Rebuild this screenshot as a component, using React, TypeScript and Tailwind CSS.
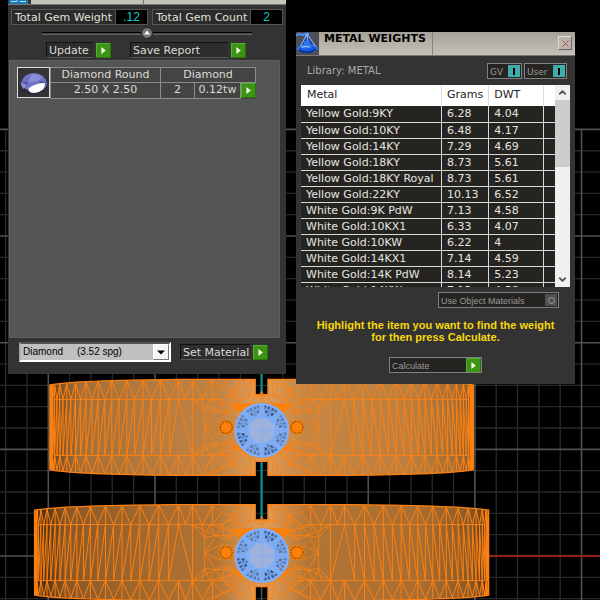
import React from 'react';
import { ChevronDown, ChevronUp, X } from 'lucide-react';

interface MetalRow {
  metal: string;
  grams: string;
  dwt: string;
}

const METALS: MetalRow[] = [
  { metal: 'Yellow Gold:9KY', grams: '6.28', dwt: '4.04' },
  { metal: 'Yellow Gold:10KY', grams: '6.48', dwt: '4.17' },
  { metal: 'Yellow Gold:14KY', grams: '7.29', dwt: '4.69' },
  { metal: 'Yellow Gold:18KY', grams: '8.73', dwt: '5.61' },
  { metal: 'Yellow Gold:18KY Royal', grams: '8.73', dwt: '5.61' },
  { metal: 'Yellow Gold:22KY', grams: '10.13', dwt: '6.52' },
  { metal: 'White Gold:9K PdW', grams: '7.13', dwt: '4.58' },
  { metal: 'White Gold:10KX1', grams: '6.33', dwt: '4.07' },
  { metal: 'White Gold:10KW', grams: '6.22', dwt: '4' },
  { metal: 'White Gold:14KX1', grams: '7.14', dwt: '4.59' },
  { metal: 'White Gold:14K PdW', grams: '8.14', dwt: '5.23' },
  { metal: 'White Gold:14KW', grams: '7.13', dwt: '4.58' },
];

/* ---------- Viewport drawing ---------- */

const CX = 261.6;

const polar = (r: number, deg: number): [number, number] => [
  r * Math.cos((deg * Math.PI) / 180),
  r * Math.sin((deg * Math.PI) / 180),
];

const poly = (points: [number, number][]) => points.map((p) => p.map((n) => n.toFixed(1)).join(',')).join(' ');

const Grid: React.FC = () => {
  const minor: string[] = [];
  const major: string[] = [];
  for (let i = -2; i < 26; i++) {
    (i % 5 === 0 ? major : minor).push(`M${48.3 + i * 21.33} 129V600`);
  }
  for (let j = 0; j < 23; j++) {
    (j % 5 === 0 ? major : minor).push(`M0 ${129.4 + j * 21.33}H600`);
  }
  return (
    <g fill="none">
      <path d={minor.join('')} stroke="#292929" strokeWidth="1.3" />
      <path d={major.join('')} stroke="#505050" strokeWidth="1.6" />
    </g>
  );
};

// Half of the band, u runs outward from the centre and v down from the middle
const halfMesh = (R: number) => {
  const edge = (u: number) => 47.5 - 5.5 * Math.pow(u / R, 5);
  const cols: number[] = [];
  const start = (Math.asin(83 / R) * 180) / Math.PI;
  for (let a = start; a < 90; a += 2.75) {
    cols.push(R * Math.sin((a * Math.PI) / 180));
  }
  let d = `M40 -28H${R - 4}M30 28H${R - 4}`;
  cols.forEach((u, i) => {
    if (i > 0) {
      d += `M${u.toFixed(1)} -28V28`;
    }
    if (i + 1 < cols.length) {
      d += `M${u.toFixed(1)} -28L${cols[i + 1].toFixed(1)} 28`;
    }
  });
  d += 'M83 -28L69 28V-28';
  const outer = [49, 59, 69, 76, ...cols];
  outer.forEach((u, i) => {
    const e = edge(u);
    const n = outer[i + 1];
    if (i % 2 === 0) {
      d += `M${u} -28V${-e}M${u} 28V${e}`;
      if (n) {
        d += `M${u} ${-e}L${n} -28M${u} 28L${n} ${edge(n)}`;
      }
    } else if (n) {
      d += `M${u} -28L${n} ${-edge(n)}M${u} ${e}L${n} 28`;
    }
  });
  return d;
};

const CROWN =
  'M69 -28L57 -15V16L69 28M69 -28L46 -17L57 0L46 17L69 28M57 -15L46 -17L40 -27L28 -37L22 -47' +
  'M57 16L46 17L40 27L28 37L22 47M57 -15L60 -28M57 16L60 28M40 -27L36 -13L46 -17M40 27L36 13L46 17' +
  'M57 0L40 -8M57 0L40 8M57 -15L52 -28L46 -17M57 16L52 28L46 17M6 -33L20 -28L28 -37L6 -47' +
  'M6 33L20 28L28 37L6 47M10 -47L12 -31M18 -47L12 -31L28 -37L20 -47M10 47L12 31M18 47L12 31' +
  'M20 -28L34 -33L28 -37L40 -40L49 -28M20 28L34 33L28 37L40 40L49 28M40 -40L34 -47M40 -40L49 -47' +
  'M34 -33L40 -27M34 33L40 27M34 -33L24 -20L40 -27M34 33L24 20L40 27M20 -28L24 -20L36 -13' +
  'M20 28L24 20L36 13M28 -37L24 -20L30 -40M28 37L24 20M26 -17L46 -17M26 17L46 17' +
  'M24 -20L52 -28M24 20L52 28M28 -24L32 -12M28 24L32 12M33 -22L34 -12M33 22L34 12M28 37L56 47M24 33L49 47' +
  'M0 -36L6 -28M0 -36V-27M3 -33L1 -27M3 -33H6M6 -33L10 -25M6 33L10 26';

const Gem: React.FC<{ y: number }> = ({ y }) => {
  const star = Array.from({ length: 8 }, (_, i) => i * 45 + 22.5);
  return (
    <g transform={`translate(${CX + 0.2} ${y})`}>
      <circle r="27.2" fill="#7eabf2" />
      {star.map((a, i) => {
        const shade = i === 1 || i === 3 || i === 6 ? '#3a5580' : '#587399';
        return (
          <g key={a} fill={shade}>
            {[-14, -5, 5, 14].map((o) => (
              <polygon key={o} points={poly([polar(25, a + o - 3.4), polar(25, a + o + 3), polar(22, a + o + 3), polar(21.6, a + o - 2.6)])} opacity="0.85" />
            ))}
            {[-9, 0.5, 10].map((o) => (
              <polygon key={o} points={poly([polar(21, a + o - 4), polar(21, a + o + 3.6), polar(17.4, a + o + 4), polar(17.6, a + o - 3)])} />
            ))}
            <polygon points={poly([polar(17, a - 6), polar(17, a + 6), polar(14.8, a)])} opacity="0.7" />
          </g>
        );
      })}
      <g fill="none" stroke="#7eb0ff">
        {star.map((a) => (
          <path
            key={a}
            d={`M${polar(13.5, a - 22.5).join(' ')}L${polar(19, a).join(' ')}L${polar(26, a - 22.5).join(' ')}M${polar(19, a).join(' ')}L${polar(26, a + 22.5).join(' ')}M${polar(19, a).join(' ')}L${polar(13.5, a + 22.5).join(' ')}M${polar(19, a).join(' ')}L${polar(26, a).join(' ')}`}
            strokeWidth="0.8"
          />
        ))}
        <circle r="26.5" strokeWidth="1.8" />
      </g>
      <polygon points={poly(star.map((a) => polar(14, a)))} fill="#9fb2dc" stroke="#80adf5" strokeWidth="1.4" />
      <path d="M-13 0H13M0 -13V13" stroke="#86aeee" strokeWidth="0.9" />
    </g>
  );
};

interface BandProps {
  y: number;
  R: number;
  id: string;
  dark?: boolean;
}

const Band: React.FC<BandProps> = ({ y, R, id, dark = false }) => {
  const outline =
    `M6.4 -48H${R * 0.4}Q${R * 0.88} -47 ${R} -42.5V42.5Q${R * 0.88} 47 ${R * 0.4} 48H6.4V34H-6.4V48` +
    `H${-R * 0.4}Q${-R * 0.88} 47 ${-R} 42.5V-42.5Q${-R * 0.88} -47 ${-R * 0.4} -48H-6.4V-32.5H6.4Z`;
  const mesh = halfMesh(R);
  return (
    <g>
      <defs>
        <linearGradient id={id}>
          <stop offset="0" stopColor={dark ? '#3a220a' : '#6e4519'} />
          <stop offset="0.07" stopColor={dark ? '#8a5826' : '#a46e36'} />
          <stop offset="0.3" stopColor={dark ? '#a96d30' : '#bb7e40'} />
          <stop offset="0.4" stopColor={dark ? '#b17433' : '#c18342'} />
          <stop offset="0.48" stopColor="#db9a58" />
          <stop offset="0.52" stopColor="#db9a58" />
          <stop offset="0.6" stopColor={dark ? '#b37534' : '#c58644'} />
          <stop offset="0.85" stopColor={dark ? '#a96d30' : '#bd7f3e'} />
          <stop offset="0.96" stopColor={dark ? '#8a5826' : '#a46e36'} />
          <stop offset="1" stopColor={dark ? '#5a3612' : '#8a5724'} />
        </linearGradient>
      </defs>
      <g transform={`translate(${CX} ${y})`}>
        <path d={outline} fill={`url(#${id})`} stroke="#fd8010" strokeWidth="1.4" />
        <g fill="none" stroke="#fb8114" strokeWidth="1">
          <path d={mesh} />
          <path d={mesh} transform="scale(-1 1)" />
          <path d={CROWN} strokeWidth="0.8" />
          <path d={CROWN} strokeWidth="0.8" transform="scale(-1 1)" />
        </g>
        <circle cy="3" r="28.2" fill="#fd8108" />
        {[1, -1].map((s) => (
          <g key={s} transform={`scale(${s} 1)`}>
            <path d="M8 -25L31 -23L20 -13ZM22 19L30 18L14 29Z" fill="#fd8108" />
            <path d={`M${R - 2} -42V42M${R - 3} -42L${R - 1} -20V20L${R - 3} 42`} fill="none" stroke="#fd8010" strokeWidth="1.6" />
            <circle cx="35.4" cy="0" r="7.6" fill="#fd8108" />
            <circle cx="35.4" cy="0" r="6" fill="none" stroke="#85501b" strokeWidth="1.4" strokeDasharray="1.5 1" />
          </g>
        ))}
      </g>
      <Gem y={y + 3} />
    </g>
  );
};

const Viewport: React.FC = () => (
  <svg
    viewBox="0 0 600 600"
    preserveAspectRatio="xMinYMin slice"
    className="absolute inset-0 h-full w-full"
    role="img"
    aria-label="Top view of two rings"
  >
    <Grid />
    <line x1={CX} x2={CX} y1="129" y2="556" stroke="#098c8e" strokeWidth="2.2" />
    <line x1="488" x2="600" y1="556.2" y2="556.2" stroke="#b01808" strokeWidth="1.6" />
    <Band y={427.4} R={211.5} id="band-upper" />
    <Band y={552.6} R={227} id="band-lower" dark />
  </svg>
);

/* ---------- Shared controls ---------- */

const PlayIcon: React.FC = () => (
  <svg viewBox="0 0 15 15" className="h-[15px] w-[15px]" aria-hidden="true">
    <rect width="15" height="15" fill="#3c9314" />
    <path d="M0 15V0H15" fill="none" stroke="#5cb83a" strokeWidth="1.6" />
    <path d="M15 0V15H0" fill="none" stroke="#27690c" strokeWidth="1.6" />
    <path d="M5.4 4L9.8 7.5L5.4 11Z" fill="#f0ffe4" />
  </svg>
);

const ActionButton: React.FC<{ label: string; className: string }> = ({ label, className }) => (
  <button type="button" className="flex items-center gap-[3px] text-[11px] leading-[15px] text-[#dcdcd4]">
    <span className={`h-4 border-t border-l border-t-[#111] border-l-[#111] border-b border-b-[#555] bg-[#2d2d2d] pl-0.5 text-left whitespace-nowrap ${className}`}>{label}</span>
    <PlayIcon />
  </button>
);

const Total: React.FC<{ label: string; value: string; className: string }> = ({ label, value, className }) => (
  <div className="flex h-4 border border-[#555] text-[11px] leading-[15px]">
    <span className={`bg-[#2b2b2b] pl-[3px] whitespace-nowrap text-[#e2e2da] ${className}`}>{label}</span>
    <output className="w-8 border-l border-[#555] bg-black text-center font-['Liberation_Sans',sans-serif] text-xs leading-[15px] text-[#18c8cc]">{value}</output>
  </div>
);

const Toggle: React.FC<{ label: string; className: string }> = ({ label, className }) => (
  <button
    type="button"
    aria-pressed="true"
    className={`flex h-4 items-center justify-between border border-[#808080] bg-[#252420] pt-px pr-px pl-0.5 text-[9px] leading-[14px] text-[#999] ${className}`}
  >
    {label}
    <span className="mb-px flex h-3 w-3 items-center justify-center bg-[#40acac]">
      <span className="h-[7px] w-0.5 bg-black" />
    </span>
  </button>
);

/* ---------- Windows ---------- */

const GemReport: React.FC = () => (
  <section className="absolute top-0 left-2 w-[278px] bg-[#333] pb-3 text-[#dcdcd4]">
    <header className="flex h-[5px] justify-between border-b border-[#777]">
      <div className="ml-px h-1 w-[19px] bg-[#187db5]">
        <svg viewBox="0 0 19 4" className="h-1 w-[19px]" aria-hidden="true">
          <path d="M2 1.5H7L9 0.5M11 1.5H17" stroke="#b6e4ff" fill="none" />
        </svg>
      </div>
      <div className="flex w-[255px] bg-[#c5c3ba]">
        <div className="w-[113px] border-r border-[#77756d]" />
      </div>
    </header>

    <div className="mt-1 flex justify-between px-[3px]">
      <Total label="Total Gem Weight" value=".12" className="w-[103px]" />
      <Total label="Total Gem Count" value="2" className="w-[97px]" />
    </div>

    <div className="mt-0.5 flex h-3 items-center justify-center">
      <div className="h-[3px] w-[99px] border-t border-b border-t-black border-b-[#666] bg-[#444]" />
      <button type="button" aria-label="Collapse" className="flex h-3 w-3 items-center justify-center rounded-full border border-[#222] bg-[#777]">
        <svg viewBox="0 0 8 6" className="h-1.5 w-2" aria-hidden="true">
          <path d="M4 0.5L7 4.5H1Z" fill="#fff" />
        </svg>
      </button>
      <div className="h-[3px] w-[99px] border-t border-b border-t-black border-b-[#666] bg-[#444]" />
    </div>

    <div className="mt-[3px] flex justify-between pr-10 pl-[38px]">
      <ActionButton label="Update" className="w-[47px]" />
      <ActionButton label="Save Report" className="w-[98px]" />
    </div>

    <div className="mr-[6px] ml-px mt-0.5 h-[278px] border border-[#606060] bg-[#555] pt-1.5 pl-[7px]">
      <div className="flex w-[239px] text-[11px] leading-[14px]">
        <div className="flex h-[31px] w-[34px] items-center justify-center border border-[#ddd] bg-[#333]">
          <svg viewBox="0 0 30 26" className="h-[26px] w-[30px]" aria-hidden="true">
            <ellipse cx="15" cy="15" rx="13.5" ry="9.5" fill="#2b2b38" />
            <path d="M2 13Q5 3 15 3Q25 3 28 13Q28 20 18 22Q7 23 2 13Z" fill="#7074c4" />
            <path d="M2 13L8 15L5 19Q2 17 2 13ZM13 4L9 12L19 11L23 7Q19 4 13 4Z" fill="#8a8edb" />
            <path d="M20 11L28 12L24 18ZM3 11L9 12L8 16Z" fill="#5357a5" />
            <path d="M10 18Q17 13 26 13Q26 21 16 23Q8 23 10 18Z" fill="#fff" />
          </svg>
        </div>
        <table className="w-[205px] table-fixed border-collapse bg-[#444] text-center">
          <colgroup>
            <col className="w-[110px]" />
            <col className="w-[34px]" />
            <col className="w-[46px]" />
            <col className="w-[15px]" />
          </colgroup>
          <tbody>
            <tr>
              <td className="h-[15px] border border-[#8b8b8b] p-0">Diamond Round</td>
              <td colSpan={3} className="h-[15px] border border-[#8b8b8b] p-0">Diamond</td>
            </tr>
            <tr>
              <td className="h-[15px] border border-[#8b8b8b] p-0">2.50 X 2.50</td>
              <td className="border border-[#8b8b8b] p-0">2</td>
              <td className="border border-[#8b8b8b] p-0">0.12tw</td>
              <td className="p-0">
                <button type="button" aria-label="Select gem" className="block"><PlayIcon /></button>
              </td>
            </tr>
          </tbody>
        </table>
      </div>
    </div>

    <div className="mt-1 flex items-center gap-[9px] pl-[11px]">
      <div className="relative">
        <select
          aria-label="Gem material"
          className="block h-5 w-[152px] appearance-none border-2 border-t-[#555] border-r-white border-b-white border-l-[#aaa] bg-[#c0c0c0] pl-0.5 font-['Liberation_Sans',sans-serif] text-[10px] leading-4 text-black"
        >
          <option>{'Diamond\u00a0\u00a0\u00a0\u00a0\u00a0(3.52 spg)'}</option>
        </select>
        <span className="pointer-events-none absolute top-0.5 right-0.5 flex h-4 w-4 items-center justify-center border border-t-white border-r-[#777] border-b-[#777] border-l-white bg-[#f4f4f4]">
          <svg viewBox="0 0 8 5" className="h-[5px] w-2" aria-hidden="true">
            <path d="M0 0.5H8L4 4.5Z" fill="#000" />
          </svg>
        </span>
      </div>
      <ActionButton label="Set Material" className="w-[70px]" />
    </div>
  </section>
);

const MetalWeights: React.FC = () => (
  <section className="absolute top-8 left-[296px] w-[279px] bg-[#333] pb-[11px]">
    <header className="flex h-6 border-b border-[#777]">
      <div className="h-[23px] w-[23px] bg-[#555]">
        <svg viewBox="0 0 23 23" className="h-[23px] w-[23px]" aria-hidden="true">
          <rect width="23" height="23" fill="#4c4f56" />
          <path d="M0 3.5Q3 1.5 7 3L11 1.5L13 2" stroke="#4b95ff" strokeWidth="2" fill="none" />
          <path d="M11 2L3.5 15L2 18H21L19 14Z" fill="#1c3f86" />
          <path d="M11 2L3.5 16M11 2L20 15M11 2L12 14" stroke="#8fb8ff" strokeWidth="1.1" fill="none" />
          <ellipse cx="11.5" cy="16.5" rx="9.8" ry="3.8" fill="#1458e0" stroke="#489aff" />
          <path d="M8 9L13 8L16 16L7 17Z" fill="#2f72ee" />
          <path d="M3 18Q11 23 20 17.5" stroke="#0b2c94" strokeWidth="1.6" fill="none" />
          <path d="M5 15.5Q9 13.5 14 15" stroke="#8bc8ff" strokeWidth="1.2" fill="none" />
        </svg>
      </div>
      <div className="flex flex-1 justify-between bg-linear-to-b from-[#a5a299] to-[#c3c1b8]">
        <h1 className="h-full w-[114px] border-r border-[#85837b] pl-[5px] text-[11px] leading-[13px] font-bold whitespace-nowrap text-black">
          METAL WEIGHTS
        </h1>
        <button
          type="button"
          aria-label="Close"
          className="mt-1 mr-[3px] flex h-3.5 w-3.5 items-center justify-center border border-t-[#ddd] border-r-[#666] border-b-[#666] border-l-[#ddd] bg-[#b9b4ac] text-[#c6403c]"
        >
          <X size={11} strokeWidth={2} />
        </button>
      </div>
    </header>

    <div className="mt-[7px] flex items-center gap-0.5 pr-2 pl-[11px]">
      <h2 className="flex-1 text-[10px] leading-[14px] text-[#aaa]">Library: METAL</h2>
      <Toggle label="GV" className="w-[35px]" />
      <Toggle label="User" className="w-[43px]" />
    </div>

    <div className="mx-[5px] mt-1.5 flex h-[202px] overflow-hidden">
      <table className="flex-1 table-fixed border-collapse text-left text-[11px]">
        <colgroup>
          <col className="w-[140px]" />
          <col className="w-[47px]" />
          <col className="w-[55px]" />
          <col className="w-[11px]" />
        </colgroup>
        <thead className="bg-white text-[#222]">
          <tr className="h-[21px]">
            <th className="border-r border-[#ddd] py-0 pl-1.5 font-normal">Metal</th>
            <th className="border-r border-[#ddd] py-0 pl-[5px] font-normal">Grams</th>
            <th className="border-r border-[#ddd] py-0 pl-[5px] font-normal">DWT</th>
            <td />
          </tr>
        </thead>
        <tbody className="bg-[#252420] text-[#e6e6e0]">
          {METALS.map((row) => (
            <tr key={row.metal} className="h-4 border-b border-[#d8d8d8] leading-[15px]">
              <td className="border-r border-[#d8d8d8] py-0 pl-[5px] whitespace-nowrap">{row.metal}</td>
              <td className="border-r border-[#d8d8d8] py-0 pl-[5px]">{row.grams}</td>
              <td className="border-r border-[#d8d8d8] py-0 pl-[5px]">{row.dwt}</td>
              <td />
            </tr>
          ))}
        </tbody>
      </table>
      <div className="flex w-[15px] flex-col items-center bg-[#f0f0f0] text-[#505050]">
        <button type="button" aria-label="Scroll up" className="flex h-[15px] items-center">
          <ChevronUp size={11} strokeWidth={4} />
        </button>
        <div className="h-[67px] w-full bg-[#cdcdcd]" />
        <button type="button" aria-label="Scroll down" className="mt-auto flex h-[15px] items-center">
          <ChevronDown size={11} strokeWidth={4} />
        </button>
      </div>
    </div>

    <div className="mt-[5px] flex justify-end pr-4">
      <button type="button" className="flex h-4 w-[121px] items-center justify-between border border-[#808080] bg-[#252420] pr-px pl-0.5 font-['Liberation_Sans',sans-serif] text-[9px] leading-[14px] text-[#999]">
        <span className="pt-0.5">Use Object Materials</span>
        <span className="flex h-3 w-3 items-center justify-center bg-[#505050]">
          <span className="h-[7px] w-[7px] rounded-full border border-[#999]" />
        </span>
      </button>
    </div>

    <p className="mt-[11px] text-center font-['Liberation_Sans',sans-serif] text-[11px] leading-3 font-bold text-[#f7d80b]">
      Highlight the item you want to find the weight
      <br />
      for then press Calculate.
    </p>

    <div className="mt-[14px] flex justify-center">
      <button type="button" className="flex h-4 w-[93px] items-center justify-between overflow-hidden border border-[#808080] bg-[#252420] pl-0.5 font-['Liberation_Sans',sans-serif] text-[9px] leading-[14px] text-[#999]">
        <span className="pt-0.5">Calculate</span>
        <PlayIcon />
      </button>
    </div>
  </section>
);

export default function App() {
  return (
    <main className="relative min-h-screen overflow-hidden bg-black font-['DejaVu_Sans',sans-serif]">
      <Viewport />
      <GemReport />
      <MetalWeights />
    </main>
  );
}
